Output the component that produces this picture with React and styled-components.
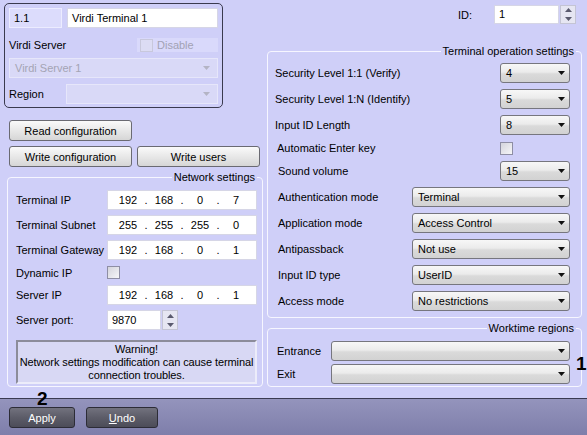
import React from "react";
import styled, { createGlobalStyle } from "styled-components";

const GlobalStyle = createGlobalStyle`
  html, body {
    margin: 0;
    padding: 0;
  }
  body {
    background: #cfcff8;
    font-family: "Liberation Sans", Arial, sans-serif;
    font-size: 11px;
    color: #000;
  }
`;

const Page = styled.div`
  position: relative;
  width: 587px;
  height: 435px;
  display: flex;
  flex-direction: column;
  background: #cfcff8;
  overflow: hidden;
`;

const Main = styled.div`
  height: 398px;
  display: flex;
  padding-left: 4px;
  box-sizing: border-box;
`;

const LeftCol = styled.div`
  width: 258px;
  display: flex;
  flex-direction: column;
`;

const RightCol = styled.div`
  width: 315px;
  margin-left: 5px;
  display: flex;
  flex-direction: column;
`;

const TopPanel = styled.div`
  margin-top: 3px;
  width: 219px;
  height: 105px;
  box-sizing: border-box;
  border: 1px solid #3a3a4e;
  border-radius: 5px;
  padding: 4px 4px 0 4px;
  display: flex;
  flex-direction: column;
`;

const Row = styled.div`
  display: flex;
  align-items: center;
  height: ${p => p.$h || 20}px;
  margin-top: ${p => p.$mt || 0}px;
  gap: ${p => p.$gap || 0}px;
  justify-content: ${p => p.$justify || "flex-start"};
  padding-left: ${p => p.$pl || 0}px;
  padding-right: ${p => p.$pr || 0}px;
`;

const Label = styled.div`
  width: ${p => (p.$w ? p.$w + "px" : "auto")};
  flex: ${p => (p.$w ? "none" : "1")};
  padding-left: ${p => p.$indent || 0}px;
  white-space: nowrap;
`;

const TextBox = styled.div`
  width: ${p => (p.$w ? p.$w + "px" : "auto")};
  flex: ${p => (p.$w ? "none" : "1")};
  height: ${p => p.$h || 20}px;
  box-sizing: border-box;
  padding-left: 4px;
  line-height: ${p => (p.$h || 20) - 2}px;
  background: ${p => (p.$muted ? "#dcdcfc" : "#fff")};
  border: 1px solid ${p => (p.$muted ? "#ececff" : "#d6d6e6")};
`;

const DisableBox = styled.div`
  width: 81px;
  height: 14px;
  background: #d9d9fb;
  display: flex;
  align-items: center;
  gap: 4px;
  padding-left: 3px;
  box-sizing: border-box;
  color: #a2a2b4;
`;

const Check = styled.div`
  width: 13px;
  height: 13px;
  box-sizing: border-box;
  border: 1px solid ${p => (p.$disabled ? "#c8c8dc" : "#8e8ea4")};
  background: ${p =>
    p.$disabled ? "#dcdcf4" : "linear-gradient(135deg, #d4d4dc, #f6f6f8)"};
`;

const CheckCell = styled.div`
  width: 70px;
`;

const ComboBox = styled.div`
  width: ${p => (p.$w ? p.$w + "px" : "100%")};
  flex: none;
  height: 20px;
  box-sizing: border-box;
  display: flex;
  align-items: center;
  justify-content: space-between;
  padding: 0 ${p => (p.$disabled ? 7 : 4)}px 0 5px;
  border: 1px solid ${p => (p.$disabled ? "#e6e6fa" : "#76767e")};
  border-radius: ${p => (p.$disabled ? "0" : "3px")};
  background: ${p =>
    p.$disabled
      ? "#d9d9f7"
      : "linear-gradient(#f7f7f7, #ebebeb 45%, #dadada 55%, #d2d2d2)"};
  color: ${p => (p.$disabled ? "#a4a4b4" : "#000")};
`;

const Arrow = ({ color }) => (
  <svg width="7" height="4" viewBox="0 0 7 4">
    <polygon points="0,0 7,0 3.5,4" fill={color} />
  </svg>
);

const Combo = ({ w, value, disabled }) => (
  <ComboBox $w={w} $disabled={disabled}>
    <span>{value}</span>
    <Arrow color={disabled ? "#b4b4c4" : "#111"} />
  </ComboBox>
);

const Button = styled.div`
  width: 123px;
  height: 21px;
  box-sizing: border-box;
  border: 1px solid #6a6a72;
  border-radius: 3px;
  background: linear-gradient(#fafafa, #e8e8e8 50%, #d6d6d6);
  display: flex;
  align-items: center;
  justify-content: center;
`;

const GroupBox = styled.div`
  position: relative;
  width: ${p => p.$w}px;
  height: ${p => p.$h}px;
  margin: ${p => p.$margin};
  box-sizing: border-box;
  border: 1px solid #f6f6ff;
  border-radius: 4px;
  padding: ${p => p.$pad};
  display: flex;
  flex-direction: column;
`;

const GroupTitle = styled.div`
  position: absolute;
  top: -8px;
  right: 5px;
  padding: 0 2px;
  background: #cfcff8;
  line-height: 14px;
`;

const IpBox = styled.div`
  width: 150px;
  height: 20px;
  box-sizing: border-box;
  background: #fff;
  border: 1px solid #d6d6e6;
  display: flex;
  align-items: center;
  padding-left: 6px;
`;

const IpPart = styled.span`
  width: ${p => (p.$dot ? 8 : 28)}px;
  text-align: center;
`;

const IpField = ({ parts }) => (
  <IpBox>
    {parts.map((n, i) => (
      <React.Fragment key={i}>
        {i > 0 && <IpPart $dot>.</IpPart>}
        <IpPart>{n}</IpPart>
      </React.Fragment>
    ))}
  </IpBox>
);

const SpinBox = styled.div`
  width: 16px;
  height: ${p => p.$h}px;
  box-sizing: border-box;
  border: 1px solid #c4c4d4;
  background: #e6e6f2;
  display: flex;
  flex-direction: column;
  align-items: center;
  justify-content: space-around;
  margin-left: 1px;
`;

const Spinner = ({ h }) => (
  <SpinBox $h={h}>
    <svg width="7" height="4" viewBox="0 0 7 4">
      <polygon points="0,4 7,4 3.5,0" fill="#5a5a6e" />
    </svg>
    <svg width="7" height="4" viewBox="0 0 7 4">
      <polygon points="0,0 7,0 3.5,4" fill="#5a5a6e" />
    </svg>
  </SpinBox>
);

const WarningBox = styled.div`
  margin-top: 10px;
  width: 241px;
  height: 44px;
  box-sizing: border-box;
  border: 2px solid;
  border-color: #8c8c9a #ececfa #ececfa #8c8c9a;
  background: #d8d8f4;
  text-align: center;
  line-height: 13px;
  padding-top: 1px;
  white-space: nowrap;
  letter-spacing: -0.1px;
`;

const BottomBar = styled.div`
  flex: 1;
  box-sizing: border-box;
  border-top: 1px solid #3a3a52;
  background: linear-gradient(#9494bc, #7e7eaa);
  display: flex;
  gap: 11px;
  padding: 8px 0 0 9px;
`;

const DarkButton = styled.div`
  width: ${p => p.$w}px;
  height: 21px;
  box-sizing: border-box;
  border: 1px solid #2c2c36;
  border-radius: 3px;
  background: linear-gradient(#72727e, #5c5c68 50%, #4c4c58);
  color: #fff;
  display: flex;
  align-items: center;
  justify-content: center;
`;

const Marker = styled.div`
  position: absolute;
  left: ${p => p.$x}px;
  top: ${p => p.$y}px;
  font-family: "Liberation Sans", Arial, sans-serif;
  font-weight: bold;
  font-size: 19px;
  line-height: 19px;
`;

const netRows = [
  { label: "Terminal IP", ip: ["192", "168", "0", "7"] },
  { label: "Terminal Subnet", ip: ["255", "255", "255", "0"] },
  { label: "Terminal Gateway", ip: ["192", "168", "0", "1"] },
];

const opRows = [
  { label: "Security Level 1:1 (Verify)", value: "4", w: 70 },
  { label: "Security Level 1:N (Identify)", value: "5", w: 70 },
  { label: "Input ID Length", value: "8", w: 70 },
  { label: "Automatic Enter key", check: true, indent: 2 },
  { label: "Sound volume", value: "15", w: 70, indent: 3 },
  { label: "Authentication mode", value: "Terminal", w: 158, indent: 3 },
  { label: "Application mode", value: "Access Control", w: 158, indent: 3 },
  { label: "Antipassback", value: "Not use", w: 158, indent: 3 },
  { label: "Input ID type", value: "UserID", w: 158, indent: 3 },
  { label: "Access mode", value: "No restrictions", w: 158, indent: 3 },
];

export default function App() {
  return (
    <Page>
      <GlobalStyle />
      <Main>
        <LeftCol>
          <TopPanel>
            <Row $gap={5}>
              <TextBox $w={53} $muted>1.1</TextBox>
              <TextBox>Virdi Terminal 1</TextBox>
            </Row>
            <Row $h={14} $mt={10} $justify="space-between">
              <Label $w={100}>Virdi Server</Label>
              <DisableBox>
                <Check $disabled />
                Disable
              </DisableBox>
            </Row>
            <Row $mt={6}>
              <Combo value="Virdi Server 1" disabled />
            </Row>
            <Row $mt={6}>
              <Label $w={57}>Region</Label>
              <Combo w={152} disabled />
            </Row>
          </TopPanel>

          <Row $h={21} $mt={12} $pl={5}>
            <Button>Read configuration</Button>
          </Row>
          <Row $h={21} $mt={5} $gap={5} $pl={5}>
            <Button>Write configuration</Button>
            <Button>Write users</Button>
          </Row>

          <GroupBox $w={256} $h={210} $margin="10px 0 0 3px" $pad="12px 5px 2px 8px">
            <GroupTitle>Network settings</GroupTitle>
            {netRows.map((r, i) => (
              <Row key={r.label} $mt={i === 0 ? 0 : 5}>
                <Label $w={91}>{r.label}</Label>
                <IpField parts={r.ip} />
              </Row>
            ))}
            <Row $h={15} $mt={5}>
              <Label $w={91}>Dynamic IP</Label>
              <Check />
            </Row>
            <Row $mt={5}>
              <Label $w={91}>Server IP</Label>
              <IpField parts={["192", "168", "0", "1"]} />
            </Row>
            <Row $mt={5}>
              <Label $w={91}>Server port:</Label>
              <TextBox $w={54}>9870</TextBox>
              <Spinner h={20} />
            </Row>
            <WarningBox>
              Warning!
              <br />
              Network settings modification can cause terminal
              <br />
              connection troubles.
            </WarningBox>
          </GroupBox>
        </LeftCol>

        <RightCol>
          <Row $h={19} $mt={5} $justify="flex-end" $pr={6}>
            <Label $w={36}>ID:</Label>
            <TextBox $w={65} $h={19}>1</TextBox>
            <Spinner h={19} />
          </Row>

          <GroupBox $w={315} $h={267} $margin="27px 0 0 0" $pad="11px 11px 6px 7px">
            <GroupTitle>Terminal operation settings</GroupTitle>
            {opRows.map((r, i) => (
              <Row
                key={r.label}
                $h={r.check ? 14 : 20}
                $mt={i === 0 ? 0 : 6}
                $justify="space-between"
              >
                <Label $indent={r.indent}>{r.label}</Label>
                {r.check ? (
                  <CheckCell>
                    <Check />
                  </CheckCell>
                ) : (
                  <Combo w={r.w} value={r.value} />
                )}
              </Row>
            ))}
          </GroupBox>

          <GroupBox $w={315} $h={59} $margin="10px 0 0 0" $pad="12px 11px 1px 9px">
            <GroupTitle>Worktime regions</GroupTitle>
            <Row $justify="space-between">
              <Label>Entrance</Label>
              <Combo w={239} />
            </Row>
            <Row $mt={3} $justify="space-between">
              <Label>Exit</Label>
              <Combo w={239} />
            </Row>
          </GroupBox>
        </RightCol>
      </Main>

      <BottomBar>
        <DarkButton $w={66}>Apply</DarkButton>
        <DarkButton $w={72}>
          <u>U</u>ndo
        </DarkButton>
      </BottomBar>

      <Marker $x={37} $y={389}>2</Marker>
      <Marker $x={576} $y={354}>1</Marker>
    </Page>
  );
}
